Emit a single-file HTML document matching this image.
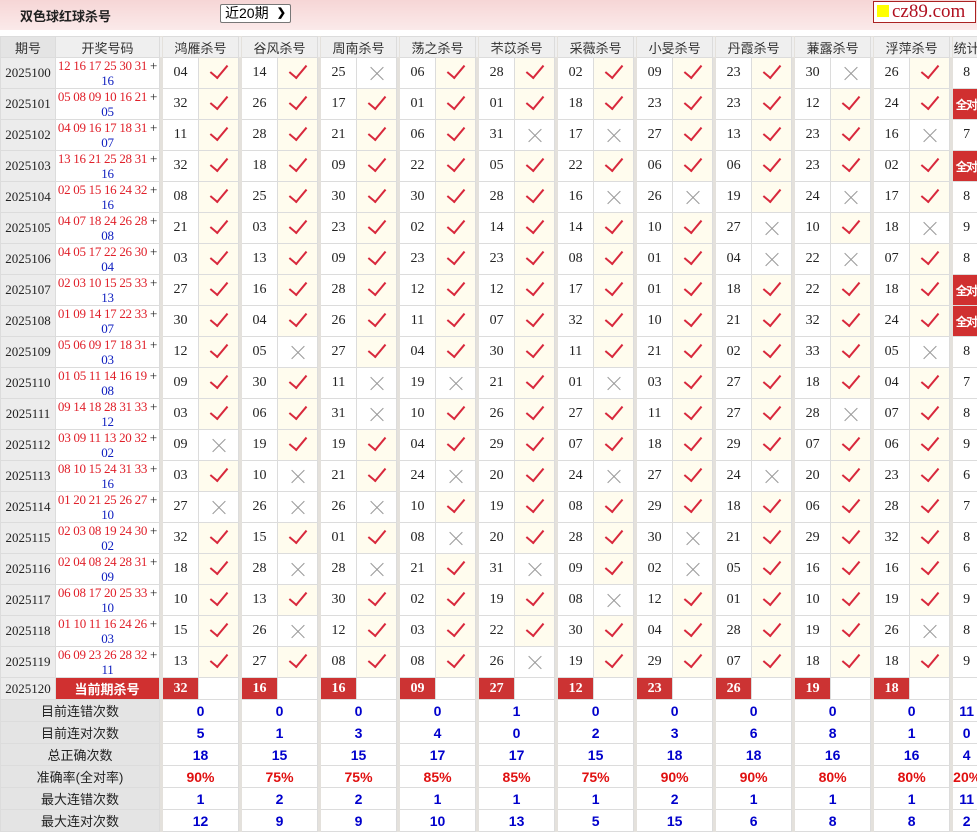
<!DOCTYPE html><html><head><meta charset="utf-8"><style>
*{margin:0;padding:0;box-sizing:border-box}
html,body{height:829px}
body{width:977px;height:829px;overflow:hidden;background:#fff;font-family:"Liberation Serif","Noto Serif CJK SC",serif;}
.top{position:absolute;left:0;top:0;width:977px;height:30px;background:linear-gradient(#f6d6d6,#fbeaea);}
.tt{position:absolute;left:20px;top:6px;font:bold 13px "Liberation Sans","Noto Sans CJK SC",sans-serif;color:#222}
.sel{position:absolute;left:220px;top:4px;width:71px;height:19px;border:1px solid #777;background:#fff;font:14px "Liberation Sans","Noto Sans CJK SC",sans-serif;padding-left:4px;line-height:17px;border-radius:2px}
.sel b{position:absolute;right:4px;top:0;font-size:11px}
.logo{position:absolute;left:873px;top:1px;width:103px;height:22px;border:1px solid #a22;background:#fff;font:19px "Liberation Serif",serif;color:#b01020;line-height:20px;padding-left:3px;white-space:nowrap;overflow:hidden}
.logo i{display:inline-block;width:12px;height:12px;background:#ff0;margin-right:3px;vertical-align:0}
table{position:absolute;left:0;top:36px;border-collapse:collapse;table-layout:fixed;width:977px}
td{border:1px solid #dcdcdc;text-align:center;font-size:14px;color:#222;padding:0;overflow:hidden;white-space:nowrap}
tr.h td{height:21px;background:#efefef;font:13px "Liberation Sans","Noto Sans CJK SC",sans-serif;color:#333}
tr.d td{height:31px}
td.s{background:#e4e1dc;border-color:#e4e1dc}
td.p{background:#ececec;font-size:13px}
td.kj{line-height:15px;font-size:13px;letter-spacing:-0.3px;color:#e0202a;white-space:nowrap}
td.kj span{color:#1020c0}
td.kj em{font-style:normal;color:#222}
td.y{background:#fffcee;position:relative}
td.w{position:relative}
td.y::after{content:"";position:absolute;left:15px;top:3px;width:8px;height:15px;border-right:2px solid #d8283c;border-bottom:2px solid #d8283c;transform:rotate(40deg)}
td.w::before,td.w::after{content:"";position:absolute;left:11px;top:15px;width:18px;height:1px;background:#999;transform:rotate(45deg)}
td.w::after{transform:rotate(-45deg)}
td.a{background:#d03030;color:#fff;font:bold 12px "Liberation Sans","Noto Sans CJK SC",sans-serif;letter-spacing:-1.5px;padding-right:1px}
tr.c td{height:22px}
tr.c td.a{font-size:13px;letter-spacing:0}
td.r{background:#cc3333;color:#fff;font-weight:bold}
tr.t td{height:22px;font:bold 14px "Liberation Sans",sans-serif;color:#0000cc}
tr.t td.l{background:#e4e4e4;font:13px "Liberation Sans","Noto Sans CJK SC",sans-serif;color:#222}
tr.t.q td{color:#e01010}
tr.t.q td.l{color:#222}
</style></head><body>
<div class="top"><div class="tt">双色球红球杀号</div><div class="sel">近20期<b>&#10095;</b></div><div class="logo"><i></i>cz89.com</div></div>
<table>
<colgroup><col style="width:55px"><col style="width:104px">
<col style="width:3px"><col style="width:36px"><col style="width:40px">
<col style="width:3px"><col style="width:36px"><col style="width:40px">
<col style="width:3px"><col style="width:36px"><col style="width:40px">
<col style="width:3px"><col style="width:36px"><col style="width:40px">
<col style="width:3px"><col style="width:36px"><col style="width:40px">
<col style="width:3px"><col style="width:36px"><col style="width:40px">
<col style="width:3px"><col style="width:36px"><col style="width:40px">
<col style="width:3px"><col style="width:36px"><col style="width:40px">
<col style="width:3px"><col style="width:36px"><col style="width:40px">
<col style="width:3px"><col style="width:36px"><col style="width:40px">
<col style="width:3px"><col style="width:28px"></colgroup>
<tr class="h"><td style="background:#e4e4e4">期号</td><td>开奖号码</td><td class="s"></td><td colspan="2">鸿雁杀号</td><td class="s"></td><td colspan="2">谷风杀号</td><td class="s"></td><td colspan="2">周南杀号</td><td class="s"></td><td colspan="2">荡之杀号</td><td class="s"></td><td colspan="2">芣苡杀号</td><td class="s"></td><td colspan="2">采薇杀号</td><td class="s"></td><td colspan="2">小旻杀号</td><td class="s"></td><td colspan="2">丹霞杀号</td><td class="s"></td><td colspan="2">蒹露杀号</td><td class="s"></td><td colspan="2">浮萍杀号</td><td class="s"></td><td>统计</td></tr>
<tr class="d"><td class="p">2025100</td><td class="kj">12 16 17 25 30 31 <em>+</em><br><span>16</span></td><td class="s"></td><td>04</td><td class="y"></td><td class="s"></td><td>14</td><td class="y"></td><td class="s"></td><td>25</td><td class="w"></td><td class="s"></td><td>06</td><td class="y"></td><td class="s"></td><td>28</td><td class="y"></td><td class="s"></td><td>02</td><td class="y"></td><td class="s"></td><td>09</td><td class="y"></td><td class="s"></td><td>23</td><td class="y"></td><td class="s"></td><td>30</td><td class="w"></td><td class="s"></td><td>26</td><td class="y"></td><td class="s"></td><td>8</td></tr>
<tr class="d"><td class="p">2025101</td><td class="kj">05 08 09 10 16 21 <em>+</em><br><span>05</span></td><td class="s"></td><td>32</td><td class="y"></td><td class="s"></td><td>26</td><td class="y"></td><td class="s"></td><td>17</td><td class="y"></td><td class="s"></td><td>01</td><td class="y"></td><td class="s"></td><td>01</td><td class="y"></td><td class="s"></td><td>18</td><td class="y"></td><td class="s"></td><td>23</td><td class="y"></td><td class="s"></td><td>23</td><td class="y"></td><td class="s"></td><td>12</td><td class="y"></td><td class="s"></td><td>24</td><td class="y"></td><td class="s"></td><td class="a">全对</td></tr>
<tr class="d"><td class="p">2025102</td><td class="kj">04 09 16 17 18 31 <em>+</em><br><span>07</span></td><td class="s"></td><td>11</td><td class="y"></td><td class="s"></td><td>28</td><td class="y"></td><td class="s"></td><td>21</td><td class="y"></td><td class="s"></td><td>06</td><td class="y"></td><td class="s"></td><td>31</td><td class="w"></td><td class="s"></td><td>17</td><td class="w"></td><td class="s"></td><td>27</td><td class="y"></td><td class="s"></td><td>13</td><td class="y"></td><td class="s"></td><td>23</td><td class="y"></td><td class="s"></td><td>16</td><td class="w"></td><td class="s"></td><td>7</td></tr>
<tr class="d"><td class="p">2025103</td><td class="kj">13 16 21 25 28 31 <em>+</em><br><span>16</span></td><td class="s"></td><td>32</td><td class="y"></td><td class="s"></td><td>18</td><td class="y"></td><td class="s"></td><td>09</td><td class="y"></td><td class="s"></td><td>22</td><td class="y"></td><td class="s"></td><td>05</td><td class="y"></td><td class="s"></td><td>22</td><td class="y"></td><td class="s"></td><td>06</td><td class="y"></td><td class="s"></td><td>06</td><td class="y"></td><td class="s"></td><td>23</td><td class="y"></td><td class="s"></td><td>02</td><td class="y"></td><td class="s"></td><td class="a">全对</td></tr>
<tr class="d"><td class="p">2025104</td><td class="kj">02 05 15 16 24 32 <em>+</em><br><span>16</span></td><td class="s"></td><td>08</td><td class="y"></td><td class="s"></td><td>25</td><td class="y"></td><td class="s"></td><td>30</td><td class="y"></td><td class="s"></td><td>30</td><td class="y"></td><td class="s"></td><td>28</td><td class="y"></td><td class="s"></td><td>16</td><td class="w"></td><td class="s"></td><td>26</td><td class="w"></td><td class="s"></td><td>19</td><td class="y"></td><td class="s"></td><td>24</td><td class="w"></td><td class="s"></td><td>17</td><td class="y"></td><td class="s"></td><td>8</td></tr>
<tr class="d"><td class="p">2025105</td><td class="kj">04 07 18 24 26 28 <em>+</em><br><span>08</span></td><td class="s"></td><td>21</td><td class="y"></td><td class="s"></td><td>03</td><td class="y"></td><td class="s"></td><td>23</td><td class="y"></td><td class="s"></td><td>02</td><td class="y"></td><td class="s"></td><td>14</td><td class="y"></td><td class="s"></td><td>14</td><td class="y"></td><td class="s"></td><td>10</td><td class="y"></td><td class="s"></td><td>27</td><td class="w"></td><td class="s"></td><td>10</td><td class="y"></td><td class="s"></td><td>18</td><td class="w"></td><td class="s"></td><td>9</td></tr>
<tr class="d"><td class="p">2025106</td><td class="kj">04 05 17 22 26 30 <em>+</em><br><span>04</span></td><td class="s"></td><td>03</td><td class="y"></td><td class="s"></td><td>13</td><td class="y"></td><td class="s"></td><td>09</td><td class="y"></td><td class="s"></td><td>23</td><td class="y"></td><td class="s"></td><td>23</td><td class="y"></td><td class="s"></td><td>08</td><td class="y"></td><td class="s"></td><td>01</td><td class="y"></td><td class="s"></td><td>04</td><td class="w"></td><td class="s"></td><td>22</td><td class="w"></td><td class="s"></td><td>07</td><td class="y"></td><td class="s"></td><td>8</td></tr>
<tr class="d"><td class="p">2025107</td><td class="kj">02 03 10 15 25 33 <em>+</em><br><span>13</span></td><td class="s"></td><td>27</td><td class="y"></td><td class="s"></td><td>16</td><td class="y"></td><td class="s"></td><td>28</td><td class="y"></td><td class="s"></td><td>12</td><td class="y"></td><td class="s"></td><td>12</td><td class="y"></td><td class="s"></td><td>17</td><td class="y"></td><td class="s"></td><td>01</td><td class="y"></td><td class="s"></td><td>18</td><td class="y"></td><td class="s"></td><td>22</td><td class="y"></td><td class="s"></td><td>18</td><td class="y"></td><td class="s"></td><td class="a">全对</td></tr>
<tr class="d"><td class="p">2025108</td><td class="kj">01 09 14 17 22 33 <em>+</em><br><span>07</span></td><td class="s"></td><td>30</td><td class="y"></td><td class="s"></td><td>04</td><td class="y"></td><td class="s"></td><td>26</td><td class="y"></td><td class="s"></td><td>11</td><td class="y"></td><td class="s"></td><td>07</td><td class="y"></td><td class="s"></td><td>32</td><td class="y"></td><td class="s"></td><td>10</td><td class="y"></td><td class="s"></td><td>21</td><td class="y"></td><td class="s"></td><td>32</td><td class="y"></td><td class="s"></td><td>24</td><td class="y"></td><td class="s"></td><td class="a">全对</td></tr>
<tr class="d"><td class="p">2025109</td><td class="kj">05 06 09 17 18 31 <em>+</em><br><span>03</span></td><td class="s"></td><td>12</td><td class="y"></td><td class="s"></td><td>05</td><td class="w"></td><td class="s"></td><td>27</td><td class="y"></td><td class="s"></td><td>04</td><td class="y"></td><td class="s"></td><td>30</td><td class="y"></td><td class="s"></td><td>11</td><td class="y"></td><td class="s"></td><td>21</td><td class="y"></td><td class="s"></td><td>02</td><td class="y"></td><td class="s"></td><td>33</td><td class="y"></td><td class="s"></td><td>05</td><td class="w"></td><td class="s"></td><td>8</td></tr>
<tr class="d"><td class="p">2025110</td><td class="kj">01 05 11 14 16 19 <em>+</em><br><span>08</span></td><td class="s"></td><td>09</td><td class="y"></td><td class="s"></td><td>30</td><td class="y"></td><td class="s"></td><td>11</td><td class="w"></td><td class="s"></td><td>19</td><td class="w"></td><td class="s"></td><td>21</td><td class="y"></td><td class="s"></td><td>01</td><td class="w"></td><td class="s"></td><td>03</td><td class="y"></td><td class="s"></td><td>27</td><td class="y"></td><td class="s"></td><td>18</td><td class="y"></td><td class="s"></td><td>04</td><td class="y"></td><td class="s"></td><td>7</td></tr>
<tr class="d"><td class="p">2025111</td><td class="kj">09 14 18 28 31 33 <em>+</em><br><span>12</span></td><td class="s"></td><td>03</td><td class="y"></td><td class="s"></td><td>06</td><td class="y"></td><td class="s"></td><td>31</td><td class="w"></td><td class="s"></td><td>10</td><td class="y"></td><td class="s"></td><td>26</td><td class="y"></td><td class="s"></td><td>27</td><td class="y"></td><td class="s"></td><td>11</td><td class="y"></td><td class="s"></td><td>27</td><td class="y"></td><td class="s"></td><td>28</td><td class="w"></td><td class="s"></td><td>07</td><td class="y"></td><td class="s"></td><td>8</td></tr>
<tr class="d"><td class="p">2025112</td><td class="kj">03 09 11 13 20 32 <em>+</em><br><span>02</span></td><td class="s"></td><td>09</td><td class="w"></td><td class="s"></td><td>19</td><td class="y"></td><td class="s"></td><td>19</td><td class="y"></td><td class="s"></td><td>04</td><td class="y"></td><td class="s"></td><td>29</td><td class="y"></td><td class="s"></td><td>07</td><td class="y"></td><td class="s"></td><td>18</td><td class="y"></td><td class="s"></td><td>29</td><td class="y"></td><td class="s"></td><td>07</td><td class="y"></td><td class="s"></td><td>06</td><td class="y"></td><td class="s"></td><td>9</td></tr>
<tr class="d"><td class="p">2025113</td><td class="kj">08 10 15 24 31 33 <em>+</em><br><span>16</span></td><td class="s"></td><td>03</td><td class="y"></td><td class="s"></td><td>10</td><td class="w"></td><td class="s"></td><td>21</td><td class="y"></td><td class="s"></td><td>24</td><td class="w"></td><td class="s"></td><td>20</td><td class="y"></td><td class="s"></td><td>24</td><td class="w"></td><td class="s"></td><td>27</td><td class="y"></td><td class="s"></td><td>24</td><td class="w"></td><td class="s"></td><td>20</td><td class="y"></td><td class="s"></td><td>23</td><td class="y"></td><td class="s"></td><td>6</td></tr>
<tr class="d"><td class="p">2025114</td><td class="kj">01 20 21 25 26 27 <em>+</em><br><span>10</span></td><td class="s"></td><td>27</td><td class="w"></td><td class="s"></td><td>26</td><td class="w"></td><td class="s"></td><td>26</td><td class="w"></td><td class="s"></td><td>10</td><td class="y"></td><td class="s"></td><td>19</td><td class="y"></td><td class="s"></td><td>08</td><td class="y"></td><td class="s"></td><td>29</td><td class="y"></td><td class="s"></td><td>18</td><td class="y"></td><td class="s"></td><td>06</td><td class="y"></td><td class="s"></td><td>28</td><td class="y"></td><td class="s"></td><td>7</td></tr>
<tr class="d"><td class="p">2025115</td><td class="kj">02 03 08 19 24 30 <em>+</em><br><span>02</span></td><td class="s"></td><td>32</td><td class="y"></td><td class="s"></td><td>15</td><td class="y"></td><td class="s"></td><td>01</td><td class="y"></td><td class="s"></td><td>08</td><td class="w"></td><td class="s"></td><td>20</td><td class="y"></td><td class="s"></td><td>28</td><td class="y"></td><td class="s"></td><td>30</td><td class="w"></td><td class="s"></td><td>21</td><td class="y"></td><td class="s"></td><td>29</td><td class="y"></td><td class="s"></td><td>32</td><td class="y"></td><td class="s"></td><td>8</td></tr>
<tr class="d"><td class="p">2025116</td><td class="kj">02 04 08 24 28 31 <em>+</em><br><span>09</span></td><td class="s"></td><td>18</td><td class="y"></td><td class="s"></td><td>28</td><td class="w"></td><td class="s"></td><td>28</td><td class="w"></td><td class="s"></td><td>21</td><td class="y"></td><td class="s"></td><td>31</td><td class="w"></td><td class="s"></td><td>09</td><td class="y"></td><td class="s"></td><td>02</td><td class="w"></td><td class="s"></td><td>05</td><td class="y"></td><td class="s"></td><td>16</td><td class="y"></td><td class="s"></td><td>16</td><td class="y"></td><td class="s"></td><td>6</td></tr>
<tr class="d"><td class="p">2025117</td><td class="kj">06 08 17 20 25 33 <em>+</em><br><span>10</span></td><td class="s"></td><td>10</td><td class="y"></td><td class="s"></td><td>13</td><td class="y"></td><td class="s"></td><td>30</td><td class="y"></td><td class="s"></td><td>02</td><td class="y"></td><td class="s"></td><td>19</td><td class="y"></td><td class="s"></td><td>08</td><td class="w"></td><td class="s"></td><td>12</td><td class="y"></td><td class="s"></td><td>01</td><td class="y"></td><td class="s"></td><td>10</td><td class="y"></td><td class="s"></td><td>19</td><td class="y"></td><td class="s"></td><td>9</td></tr>
<tr class="d"><td class="p">2025118</td><td class="kj">01 10 11 16 24 26 <em>+</em><br><span>03</span></td><td class="s"></td><td>15</td><td class="y"></td><td class="s"></td><td>26</td><td class="w"></td><td class="s"></td><td>12</td><td class="y"></td><td class="s"></td><td>03</td><td class="y"></td><td class="s"></td><td>22</td><td class="y"></td><td class="s"></td><td>30</td><td class="y"></td><td class="s"></td><td>04</td><td class="y"></td><td class="s"></td><td>28</td><td class="y"></td><td class="s"></td><td>19</td><td class="y"></td><td class="s"></td><td>26</td><td class="w"></td><td class="s"></td><td>8</td></tr>
<tr class="d"><td class="p">2025119</td><td class="kj">06 09 23 26 28 32 <em>+</em><br><span>11</span></td><td class="s"></td><td>13</td><td class="y"></td><td class="s"></td><td>27</td><td class="y"></td><td class="s"></td><td>08</td><td class="y"></td><td class="s"></td><td>08</td><td class="y"></td><td class="s"></td><td>26</td><td class="w"></td><td class="s"></td><td>19</td><td class="y"></td><td class="s"></td><td>29</td><td class="y"></td><td class="s"></td><td>07</td><td class="y"></td><td class="s"></td><td>18</td><td class="y"></td><td class="s"></td><td>18</td><td class="y"></td><td class="s"></td><td>9</td></tr>
<tr class="c"><td class="p">2025120</td><td class="a">当前期杀号</td><td class="s"></td><td class="r">32</td><td></td><td class="s"></td><td class="r">16</td><td></td><td class="s"></td><td class="r">16</td><td></td><td class="s"></td><td class="r">09</td><td></td><td class="s"></td><td class="r">27</td><td></td><td class="s"></td><td class="r">12</td><td></td><td class="s"></td><td class="r">23</td><td></td><td class="s"></td><td class="r">26</td><td></td><td class="s"></td><td class="r">19</td><td></td><td class="s"></td><td class="r">18</td><td></td><td class="s"></td><td></td></tr>
<tr class="t"><td class="l" colspan="2">目前连错次数</td><td class="s"></td><td colspan="2">0</td><td class="s"></td><td colspan="2">0</td><td class="s"></td><td colspan="2">0</td><td class="s"></td><td colspan="2">0</td><td class="s"></td><td colspan="2">1</td><td class="s"></td><td colspan="2">0</td><td class="s"></td><td colspan="2">0</td><td class="s"></td><td colspan="2">0</td><td class="s"></td><td colspan="2">0</td><td class="s"></td><td colspan="2">0</td><td class="s"></td><td>11</td></tr>
<tr class="t"><td class="l" colspan="2">目前连对次数</td><td class="s"></td><td colspan="2">5</td><td class="s"></td><td colspan="2">1</td><td class="s"></td><td colspan="2">3</td><td class="s"></td><td colspan="2">4</td><td class="s"></td><td colspan="2">0</td><td class="s"></td><td colspan="2">2</td><td class="s"></td><td colspan="2">3</td><td class="s"></td><td colspan="2">6</td><td class="s"></td><td colspan="2">8</td><td class="s"></td><td colspan="2">1</td><td class="s"></td><td>0</td></tr>
<tr class="t"><td class="l" colspan="2">总正确次数</td><td class="s"></td><td colspan="2">18</td><td class="s"></td><td colspan="2">15</td><td class="s"></td><td colspan="2">15</td><td class="s"></td><td colspan="2">17</td><td class="s"></td><td colspan="2">17</td><td class="s"></td><td colspan="2">15</td><td class="s"></td><td colspan="2">18</td><td class="s"></td><td colspan="2">18</td><td class="s"></td><td colspan="2">16</td><td class="s"></td><td colspan="2">16</td><td class="s"></td><td>4</td></tr>
<tr class="t q"><td class="l" colspan="2">准确率(全对率)</td><td class="s"></td><td colspan="2">90%</td><td class="s"></td><td colspan="2">75%</td><td class="s"></td><td colspan="2">75%</td><td class="s"></td><td colspan="2">85%</td><td class="s"></td><td colspan="2">85%</td><td class="s"></td><td colspan="2">75%</td><td class="s"></td><td colspan="2">90%</td><td class="s"></td><td colspan="2">90%</td><td class="s"></td><td colspan="2">80%</td><td class="s"></td><td colspan="2">80%</td><td class="s"></td><td>20%</td></tr>
<tr class="t"><td class="l" colspan="2">最大连错次数</td><td class="s"></td><td colspan="2">1</td><td class="s"></td><td colspan="2">2</td><td class="s"></td><td colspan="2">2</td><td class="s"></td><td colspan="2">1</td><td class="s"></td><td colspan="2">1</td><td class="s"></td><td colspan="2">1</td><td class="s"></td><td colspan="2">2</td><td class="s"></td><td colspan="2">1</td><td class="s"></td><td colspan="2">1</td><td class="s"></td><td colspan="2">1</td><td class="s"></td><td>11</td></tr>
<tr class="t"><td class="l" colspan="2">最大连对次数</td><td class="s"></td><td colspan="2">12</td><td class="s"></td><td colspan="2">9</td><td class="s"></td><td colspan="2">9</td><td class="s"></td><td colspan="2">10</td><td class="s"></td><td colspan="2">13</td><td class="s"></td><td colspan="2">5</td><td class="s"></td><td colspan="2">15</td><td class="s"></td><td colspan="2">6</td><td class="s"></td><td colspan="2">8</td><td class="s"></td><td colspan="2">8</td><td class="s"></td><td>2</td></tr>
</table>
</body></html>
